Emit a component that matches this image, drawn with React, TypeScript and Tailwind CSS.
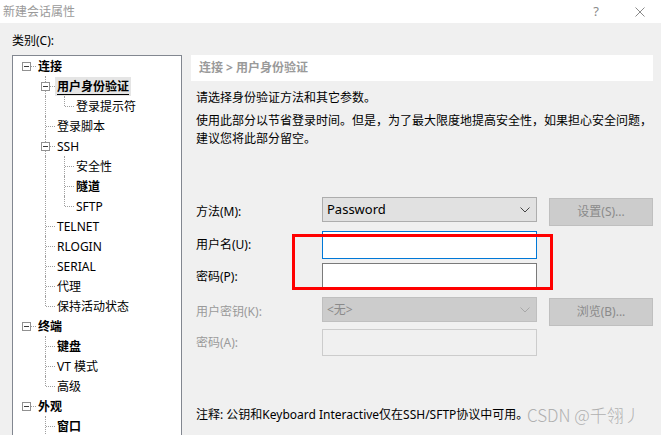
import React from 'react';

type TreeRow = {
  label: string;
  level: number;
  bold?: boolean;
  expander?: boolean;
  last?: boolean;
  selected?: boolean;
  cont?: boolean[]; // ancestor columns (index = column) whose line keeps going
};

const rows: TreeRow[] = [
  { label: '连接', level: 0, bold: true, expander: true },
  { label: '用户身份验证', level: 1, bold: true, expander: true, selected: true },
  { label: '登录提示符', level: 2, last: true, cont: [false, true] },
  { label: '登录脚本', level: 1 },
  { label: 'SSH', level: 1, expander: true },
  { label: '安全性', level: 2, cont: [false, true] },
  { label: '隧道', level: 2, bold: true, cont: [false, true] },
  { label: 'SFTP', level: 2, last: true, cont: [false, true] },
  { label: 'TELNET', level: 1 },
  { label: 'RLOGIN', level: 1 },
  { label: 'SERIAL', level: 1 },
  { label: '代理', level: 1 },
  { label: '保持活动状态', level: 1, last: true },
  { label: '终端', level: 0, bold: true, expander: true },
  { label: '键盘', level: 1, bold: true },
  { label: 'VT 模式', level: 1 },
  { label: '高级', level: 1, last: true },
  { label: '外观', level: 0, bold: true, expander: true },
  { label: '窗口', level: 1, bold: true },
];

const ExpandBox = () => (
  <span className="absolute left-[5px] top-[6px] w-[9px] h-[9px] border border-[#919191] bg-white flex items-center justify-center z-10">
    <span className="w-[5px] h-px bg-[#3c3c3c]" />
  </span>
);

const TreeItem = ({ row }: { row: TreeRow }) => {
  const cols = [];
  for (let c = 0; c <= row.level; c++) {
    const own = c === row.level;
    const cont = row.cont?.[c];
    cols.push(
      <span key={c} className="relative w-[19px] h-[20px] shrink-0">
        {!own && cont && (
          <span className="absolute left-[9px] top-0 h-[20px] border-l border-dotted border-[#a0a0a0]" />
        )}
        {own && row.level > 0 && (
          <span
            className={
              row.last
                ? 'absolute left-[9px] top-0 h-[10px] border-l border-dotted border-[#a0a0a0]'
                : 'absolute left-[9px] top-0 h-[20px] border-l border-dotted border-[#a0a0a0]'
            }
          />
        )}
        {own && (
          <span className="absolute left-[10px] top-[10px] w-[9px] border-t border-dotted border-[#a0a0a0]" />
        )}
        {own && row.expander && <ExpandBox />}
      </span>
    );
  }
  return (
    <div className="flex items-center h-[20px] pl-[4px]">
      {cols}
      <span
        className={
          'ml-[0px] px-[2px] h-[19px] leading-[19px] whitespace-nowrap text-black ' +
          (row.bold ? 'font-bold ' : '') +
          (row.selected ? 'bg-[#e5e5e5] underline underline-offset-[3px]' : '')
        }
      >
        {row.label}
      </span>
    </div>
  );
};

const Chevron = ({ color }: { color: string }) => (
  <svg width="10" height="6" viewBox="0 0 10 6" className="shrink-0">
    <path d="M0.5 0.5 L5 5 L9.5 0.5" fill="none" stroke={color} strokeWidth="1" />
  </svg>
);

export default function App() {
  return (
    <div className="relative w-[661px] h-[435px] overflow-hidden bg-[#f0f0f0] text-[12px] text-black font-['Noto_Sans','Noto_Sans_CJK_SC',sans-serif]">
      {/* Title bar */}
      <div className="h-[23px] bg-white flex items-center pl-[3px]">
        <span className="text-[#9a9a9a] leading-none">新建会话属性</span>
        <span className="ml-auto text-[#8a8a8a] text-[13px] leading-none mr-[36px]">?</span>
        <svg width="10" height="10" viewBox="0 0 10 10" className="mr-[16px]">
          <path d="M0.5 0.5 L9.5 9.5 M9.5 0.5 L0.5 9.5" stroke="#8a8a8a" strokeWidth="1" />
        </svg>
      </div>

      <div className="pt-[9px]">
        <div className="pl-[12px] leading-[17px]">类别(C):</div>

        <div className="flex mt-[6px] pl-[12px]">
          {/* Category tree */}
          <div className="w-[170px] h-[400px] shrink-0 bg-white border border-[#828790]">
            {rows.map((r) => (
              <TreeItem key={r.label} row={r} />
            ))}
          </div>

          {/* Right panel */}
          <div className="ml-[9px] w-[462px] shrink-0">
            <div className="h-[26px] bg-white flex items-center pl-[8px] font-bold text-[#9a9a9a]">
              连接 &gt; 用户身份验证
            </div>

            <div className="pl-[5px] leading-[18px]">
              <p className="mt-[7.5px]">请选择身份验证方法和其它参数。</p>
              <p className="mt-[5px]">
                使用此部分以节省登录时间。但是，为了最大限度地提高安全性，如果担心安全问题，
                <br />
                建议您将此部分留空。
              </p>
            </div>

            <div className="pl-[5px] mt-[49.5px]">
              <div className="flex items-center h-[29px]">
                <span className="w-[126px] shrink-0">方法(M):</span>
                <div className="self-start w-[215px] h-[25px] bg-[#e1e1e1] border border-[#adadad] flex items-center pl-[4px] pr-[6px]">
                  <span className="text-[13px]">Password</span>
                  <span className="ml-auto"><Chevron color="#444" /></span>
                </div>
                <div className="self-start mt-[1px] ml-[12px] w-[104px] h-[28px] bg-[#cccccc] border border-[#bfbfbf] flex items-center justify-center text-[#8a8a8a]">
                  设置(S)...
                </div>
              </div>

              <div className="flex items-center h-[28px] mt-[5px]">
                <span className="w-[126px] shrink-0">用户名(U):</span>
                <div className="w-[215px] h-[28px] bg-white border border-[#0078d7]" />
              </div>

              <div className="flex items-center h-[27px] mt-[4px]">
                <span className="w-[126px] shrink-0">密码(P):</span>
                <div className="w-[215px] h-[27px] bg-white border border-[#7a7a7a]" />
              </div>

              <div className="flex items-center h-[29px] mt-[7px] text-[#9a9a9a]">
                <span className="w-[126px] shrink-0">用户密钥(K):</span>
                <div className="self-start w-[215px] h-[25px] bg-[#cccccc] border border-[#bfbfbf] flex items-center pl-[4px] pr-[6px] text-[#8a8a8a]">
                  <span>&lt;无&gt;</span>
                  <span className="ml-auto"><Chevron color="#a8a8a8" /></span>
                </div>
                <div className="self-start mt-[1px] ml-[12px] w-[104px] h-[28px] bg-[#cccccc] border border-[#bfbfbf] flex items-center justify-center text-[#8a8a8a]">
                  浏览(B)...
                </div>
              </div>

              <div className="flex items-center h-[27px] mt-[3px] text-[#9a9a9a]">
                <span className="w-[126px] shrink-0">密码(A):</span>
                <div className="w-[215px] h-[27px] bg-[#f0f0f0] border border-[#cccccc]" />
              </div>

              <p className="mt-[50px] leading-[18px] whitespace-nowrap">
                注释: 公钥和Keyboard Interactive仅在SSH/SFTP协议中可用。
              </p>
            </div>
          </div>
        </div>
      </div>

      {/* Red highlight box drawn over the username/password inputs */}
      <div className="absolute left-[292px] top-[234px] w-[261px] h-[56px] border-[3px] border-[#ff0000] pointer-events-none" />

      {/* Watermark */}
      <div className="absolute left-[527px] top-[404px] text-[17px] leading-[22px] font-light text-[#b0b0b0] whitespace-nowrap font-['Noto_Sans_CJK_SC',sans-serif]">
        CSDN @千翎丿
      </div>
    </div>
  );
}
